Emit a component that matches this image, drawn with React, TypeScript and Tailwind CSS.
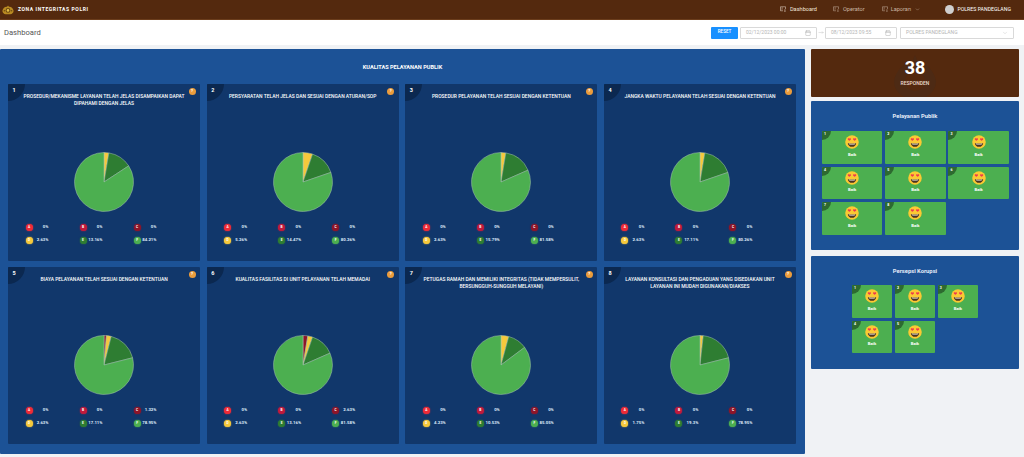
import React from 'react';
import { Calendar, ChevronDown, MoveRight } from 'lucide-react';

const FONT = { fontFamily: 'Roboto, "Open Sans", sans-serif' };

interface Question {
  id: number;
  title: string[];
  values: number[];
  labels: string[];
}

const QUESTIONS: Question[] = [
  { id: 1, title: ['PROSEDUR/MEKANISME LAYANAN TELAH JELAS DISAMPAIKAN DAPAT', 'DIPAHAMI DENGAN JELAS'], values: [0, 0, 0, 2.63, 13.16, 84.21], labels: ['0%', '0%', '0%', '2.63%', '13.16%', '84.21%'] },
  { id: 2, title: ['PERSYARATAN TELAH JELAS DAN SESUAI DENGAN ATURAN/SOP'], values: [0, 0, 0, 5.26, 14.47, 80.26], labels: ['0%', '0%', '0%', '5.26%', '14.47%', '80.26%'] },
  { id: 3, title: ['PROSEDUR PELAYANAN TELAH SESUAI DENGAN KETENTUAN'], values: [0, 0, 0, 2.63, 15.79, 81.58], labels: ['0%', '0%', '0%', '2.63%', '15.79%', '81.58%'] },
  { id: 4, title: ['JANGKA WAKTU PELAYANAN TELAH SESUAI DENGAN KETENTUAN'], values: [0, 0, 0, 2.63, 17.11, 80.26], labels: ['0%', '0%', '0%', '2.63%', '17.11%', '80.26%'] },
  { id: 5, title: ['BIAYA PELAYANAN TELAH SESUAI DENGAN KETENTUAN'], values: [0, 0, 1.32, 2.63, 17.11, 78.95], labels: ['0%', '0%', '1.32%', '2.63%', '17.11%', '78.95%'] },
  { id: 6, title: ['KUALITAS FASILITAS DI UNIT PELAYANAN TELAH MEMADAI'], values: [0, 0, 2.63, 2.63, 13.16, 81.58], labels: ['0%', '0%', '2.63%', '2.63%', '13.16%', '81.58%'] },
  { id: 7, title: ['PETUGAS RAMAH DAN MEMILIKI INTEGRITAS (TIDAK MEMPERSULIT,', 'BERSUNGGUH-SUNGGUH MELAYANI)'], values: [0, 0, 0, 4.23, 10.53, 85.05], labels: ['0%', '0%', '0%', '4.23%', '10.53%', '85.05%'] },
  { id: 8, title: ['LAYANAN KONSULTASI DAN PENGADUAN YANG DISEDIAKAN UNIT', 'LAYANAN INI MUDAH DIGUNAKAN/DIAKSES'], values: [0, 0, 0, 1.75, 19.3, 78.95], labels: ['0%', '0%', '0%', '1.75%', '19.3%', '78.95%'] },
];

const COLORS = ['#ee2b37', '#c01a3c', '#8e1529', '#f6c93c', '#2e7d32', '#4caf50'];
const LETTERS = ['A', 'B', 'C', 'D', 'E', 'F'];

function Pie({ values }: { values: number[] }) {
  const total = values.reduce((a, b) => a + b, 0);
  let angle = 0;
  const slices = values.map((v, i) => {
    if (v === 0) return null;
    const start = angle;
    angle += (v / total) * Math.PI * 2;
    const x1 = 30 + 29.5 * Math.sin(start);
    const y1 = 30 - 29.5 * Math.cos(start);
    const x2 = 30 + 29.5 * Math.sin(angle);
    const y2 = 30 - 29.5 * Math.cos(angle);
    const large = angle - start > Math.PI ? 1 : 0;
    return (
      <path
        key={i}
        d={`M30 30 L${x1} ${y1} A29.5 29.5 0 ${large} 1 ${x2} ${y2} Z`}
        fill={COLORS[i]}
        stroke="#a9c4b0"
        strokeWidth="0.5"
      />
    );
  });
  return (
    <svg viewBox="0 0 60 60" className="w-[60px] h-[60px] block">
      {slices}
    </svg>
  );
}

function QuestionCard({ q }: { q: Question }) {
  return (
    <div className="relative bg-[#11376b] rounded-[1px] h-[177px] flex flex-col items-center overflow-hidden">
      <div className="absolute top-0 left-0 w-[17px] h-[17px] rounded-br-[17px] bg-[#0b2850] text-white text-[5.5px] font-bold pl-[4.5px] pt-[2px]">
        {q.id}
      </div>
      <div className="absolute top-[4px] right-[4.5px] w-[7px] h-[7px] rounded-full bg-[#eb9c3c] text-white text-[4px] font-bold flex items-center justify-center">
        ?
      </div>
      <div className="h-[51px] pt-[9px] text-center text-white text-[4.95px] leading-[7.6px] font-medium w-full">
        {q.title.map(line => (
          <div key={line}>{line}</div>
        ))}
      </div>
      <div className="mt-[17px]">
        <Pie values={q.values} />
      </div>
      <div className="mt-[12.5px] w-[162px] grid grid-cols-3 gap-y-[6px] self-start ml-[17.5px]">
        {q.labels.map((label, i) => (
          <div key={i} className="flex items-center w-[23px] justify-between h-[7px]">
            <span
              className="w-[7px] h-[7px] rounded-full text-white text-[3.2px] font-bold flex items-center justify-center"
              style={{ backgroundColor: COLORS[i], boxShadow: `0 0 1.5px ${COLORS[i]}` }}
            >
              {LETTERS[i]}
            </span>
            <span className="text-[#dbe7f7] text-[4.3px] font-bold">{label}</span>
          </div>
        ))}
      </div>
    </div>
  );
}

function Emoji({ size }: { size: number }) {
  const heart = 'c-1.1-2-4-1.2-3.6 1 .3 1.5 2.2 2.6 3.6 3.6 1.4-1 3.3-2.1 3.6-3.6 .4-2.2-2.5-3-3.6-1z';
  return (
    <svg viewBox="0 0 32 32" width={size} height={size} className="block">
      <circle cx="16" cy="16" r="15.5" fill="#fbc933" />
      <path d="M6.5 18 C11 20 21 20 25.5 18 C25 23.5 21.5 27 16 27 C10.5 27 7 23.5 6.5 18z" fill="#4a3320" />
      <path d="M8.5 19.3 C12 20.3 20 20.3 23.5 19.3 L23 21 C19 22 13 22 9 21z" fill="#fff" />
      <path d={`M10 8.6${heart}`} fill="#ef3a4c" />
      <path d={`M22 8.6${heart}`} fill="#ef3a4c" />
    </svg>
  );
}

function Tile({ n, size }: { n: number; size: 'lg' | 'sm' }) {
  return (
    <div className={`relative bg-[#4caf50] rounded-[1px] h-[32.7px] flex flex-col items-center overflow-hidden ${size === 'lg' ? 'w-[60.3px]' : 'w-[40px]'}`}>
      <div className="absolute top-0 left-0 w-[9px] h-[9px] rounded-br-[9px] bg-[#2d6a30] text-white text-[3.6px] font-bold pl-[2px] pt-[1px]">
        {n}
      </div>
      <div className="mt-[4px]">
        <Emoji size={14} />
      </div>
      <div className="mt-[2.5px] text-white text-[4.2px] leading-[6px] font-bold">Baik</div>
    </div>
  );
}

function Brand() {
  return (
    <svg viewBox="0 0 16 13" className="w-[12px] h-[10px] block">
      <path d="M8 0.5 L9.3 2.2 C12 1.8 14.6 4 15.4 7 C15.8 9.5 13.5 12 11 12.3 L5 12.3 C2.5 12 0.2 9.5 0.6 7 C1.4 4 4 1.8 6.7 2.2z" fill="#b98a22" />
      <circle cx="8" cy="7" r="3.2" fill="#6e4a12" />
      <circle cx="8" cy="7" r="1.7" fill="#e6c04a" />
      <circle cx="3.2" cy="7.5" r="1" fill="#6e4a12" />
      <circle cx="12.8" cy="7.5" r="1" fill="#6e4a12" />
    </svg>
  );
}

function NavGlyph() {
  return (
    <svg viewBox="0 0 12 12" fill="none" stroke="currentColor" strokeWidth="1" className="w-[6px] h-[6px] block">
      <path d="M1 1.5 H11 V6 M1 1.5 V9.5 H6" />
      <path d="M3 4 H6 M3 6.5 H5 M8 8 H11.5 M8 10.5 H11.5" />
    </svg>
  );
}

function NavItem({ label, chevron, bright, gap }: { label: string; chevron?: boolean; bright?: boolean; gap: string }) {
  return (
    <div className={`flex items-center text-[5.6px] ${bright ? 'text-[#f2e6da]' : 'text-[#c9b5a3]'}`}>
      <span className={gap}><NavGlyph /></span>
      <span>{label}</span>
      {chevron && <ChevronDown className="w-[5px] h-[5px] ml-[4.5px]" strokeWidth={2} />}
    </div>
  );
}

function DateBox({ value, w }: { value: string; w: string }) {
  return (
    <div className={`${w} h-[12px] bg-white border border-[#d9d9d9] rounded-[1px] flex items-center justify-between px-[5px] text-[5px] text-[#b5b5b5]`}>
      <span>{value}</span>
      <Calendar className="w-[6px] h-[6px] text-[#999]" strokeWidth={1.5} />
    </div>
  );
}

export default function App() {
  return (
    <div className="w-[1024px] h-[457px] bg-[#f0f2f5] overflow-hidden" style={FONT}>
      <header className="h-[20px] bg-[#54290e] border-b border-[#6b3d1c] flex items-center pl-[2px] pr-[13px]">
        <Brand />
        <span className="ml-[4px] text-white text-[5px] font-bold tracking-[0.6px]">ZONA INTEGRITAS POLRI</span>
        <div className="ml-auto flex items-center">
          <NavItem label="Dashboard" bright gap="mr-[3.5px]" />
          <div className="ml-[16px]"><NavItem label="Operator" gap="mr-[4px]" /></div>
          <div className="ml-[17px]"><NavItem label="Laporan" chevron gap="mr-[3px]" /></div>
          <div className="ml-[25px] w-[9px] h-[9px] rounded-full bg-[#cfcfcf]" />
          <span className="ml-[3px] text-white text-[5.2px]">POLRES PANDEGLANG</span>
        </div>
      </header>

      <div className="h-[25px] bg-white flex items-center pl-[4px] pr-[10px]">
        <span className="text-[7.6px] text-[#555] pt-[1px]">Dashboard</span>
        <div className="ml-auto flex items-center">
          <div className="w-[27px] h-[12px] bg-[#1890ff] rounded-[1px] text-white text-[4.6px] font-medium flex items-center justify-center">RESET</div>
          <div className="ml-[2px]"><DateBox value="02/12/2023 00:00" w="w-[77px]" /></div>
          <MoveRight className="w-[8px] h-[5px] text-[#aaa]" strokeWidth={1.5} />
          <DateBox value="08/12/2023 09:55" w="w-[72px]" />
          <div className="ml-[3px] w-[114px] h-[12px] bg-white border border-[#d9d9d9] rounded-[1px] flex items-center justify-between px-[5px] text-[5px] text-[#b5b5b5]">
            <span>POLRES PANDEGLANG</span>
            <ChevronDown className="w-[6px] h-[6px] text-[#bbb]" strokeWidth={1.5} />
          </div>
        </div>
      </div>

      <div className="flex pt-[4px]">
        <main className="w-[805px] h-[405px] bg-[#1c5296] rounded-[1px] px-[8px]">
          <div className="h-[34.5px] flex items-center justify-center text-white text-[5.6px] font-bold pt-[1px]">
            KUALITAS PELAYANAN PUBLIK
          </div>
          <div className="grid grid-cols-4 gap-x-[6.6px] gap-y-[6px] w-[788px]">
            {QUESTIONS.map(q => (
              <QuestionCard key={q.id} q={q} />
            ))}
          </div>
        </main>

        <aside className="ml-[6px] w-[208px] flex flex-col">
          <div className="relative h-[48px] bg-[#54290e] rounded-[1px] flex flex-col items-center overflow-hidden">
            <svg viewBox="0 0 46 46" className="absolute top-[6px] left-[81px] w-[46px] h-[46px]">
              <path d="M23 0 L26 7 C34 8 42 15 44 26 C44 36 36 44 23 44 C10 44 2 36 2 26 C4 15 12 8 20 7z" fill="#4d2a14" />
              <circle cx="23" cy="26" r="10" fill="#54290e" />
            </svg>
            <div className="relative mt-[9px] text-white text-[18px] leading-[20px] font-bold">38</div>
            <div className="relative mt-[2px] text-[#ecdcd0] text-[5px] font-medium">RESPONDEN</div>
          </div>

          <section className="mt-[4px] h-[149px] bg-[#1c5296] rounded-[1px] pl-[11px] flex flex-col">
            <div className="h-[30px] flex items-center justify-center pr-[11px] pt-[1px] text-[#e4ecf8] text-[5.8px] font-bold">Pelayanan Publik</div>
            <div className="grid grid-cols-3 gap-x-[2.7px] gap-y-[3px] w-[187px]">
              {[1, 2, 3, 4, 5, 6, 7, 8].map(n => (
                <Tile key={n} n={n} size="lg" />
              ))}
            </div>
          </section>

          <section className="mt-[6px] h-[113px] bg-[#1c5296] rounded-[1px] flex flex-col items-center">
            <div className="h-[29px] flex items-center justify-center pt-[1px] text-[#e4ecf8] text-[5.8px] font-bold">Persepsi Korupsi</div>
            <div className="grid grid-cols-3 gap-x-[2.8px] gap-y-[3px] w-[126px]">
              {[1, 2, 3, 4, 5].map(n => (
                <Tile key={n} n={n} size="sm" />
              ))}
            </div>
          </section>
        </aside>
      </div>
    </div>
  );
}
